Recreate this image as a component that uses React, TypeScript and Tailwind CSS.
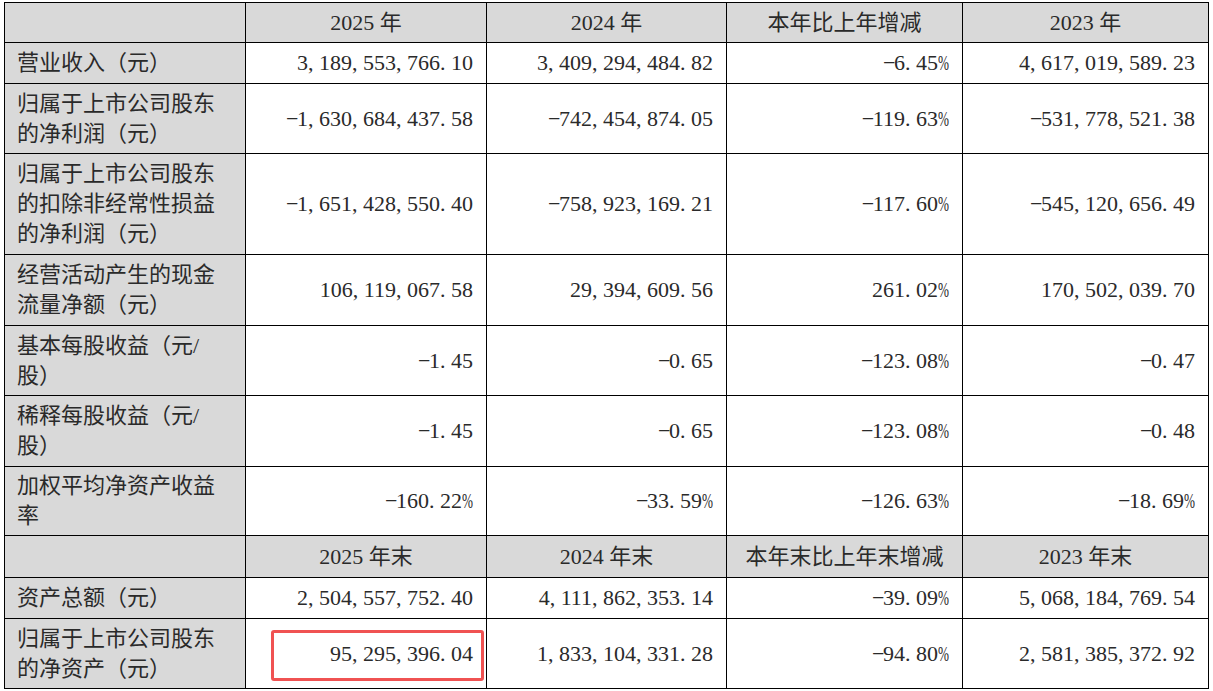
import React from 'react';

type Row = {
  label: string[];
  values: string[];
  h: string;
};

const topHead = ['2025 年', '2024 年', '本年比上年增减', '2023 年'];
const bottomHead = ['2025 年末', '2024 年末', '本年末比上年末增减', '2023 年末'];

const topRows: Row[] = [
  { label: ['营业收入（元）'], values: ['3,189,553,766.10', '3,409,294,484.82', '−6.45%', '4,617,019,589.23'], h: 'h-[41px]' },
  { label: ['归属于上市公司股东', '的净利润（元）'], values: ['−1,630,684,437.58', '−742,454,874.05', '−119.63%', '−531,778,521.38'], h: 'h-[70px]' },
  { label: ['归属于上市公司股东', '的扣除非经常性损益', '的净利润（元）'], values: ['−1,651,428,550.40', '−758,923,169.21', '−117.60%', '−545,120,656.49'], h: 'h-[101px]' },
  { label: ['经营活动产生的现金', '流量净额（元）'], values: ['106,119,067.58', '29,394,609.56', '261.02%', '170,502,039.70'], h: 'h-[71px]' },
  { label: ['基本每股收益（元/', '股）'], values: ['−1.45', '−0.65', '−123.08%', '−0.47'], h: 'h-[70px]' },
  { label: ['稀释每股收益（元/', '股）'], values: ['−1.45', '−0.65', '−123.08%', '−0.48'], h: 'h-[71px]' },
  { label: ['加权平均净资产收益', '率'], values: ['−160.22%', '−33.59%', '−126.63%', '−18.69%'], h: 'h-[69px]' },
];

const bottomRows: Row[] = [
  { label: ['资产总额（元）'], values: ['2,504,557,752.40', '4,111,862,353.14', '−39.09%', '5,068,184,769.54'], h: 'h-[41px]' },
  { label: ['归属于上市公司股东', '的净资产（元）'], values: ['95,295,396.04', '1,833,104,331.28', '−94.80%', '2,581,385,372.92'], h: 'h-[70px]' },
];

// punctuation gets a half-em box, like the document's original font
function Num({ v }: { v: string }) {
  return (
    <span>
      {[...v].map((c, i) => {
        if (c === ',' || c === '.' || c === '−')
          return (
            <span key={i} className="inline-block w-[11px] text-left">
              {c}
            </span>
          );
        if (c === '%')
          return (
            <span key={i} className="inline-block w-[11px] text-left">
              <span className="inline-block origin-left scale-x-[0.6]">%</span>
            </span>
          );
        return c;
      })}
    </span>
  );
}

function HeadRow({ cols, h }: { cols: string[]; h: string }) {
  return (
    <tr className={h}>
      <td className="border border-black bg-[#d9d9d9] p-0"></td>
      {cols.map((c) => (
        <td key={c} className="border border-black bg-[#d9d9d9] p-0 text-center">
          {c}
        </td>
      ))}
    </tr>
  );
}

function DataRow({ row, mark }: { row: Row; mark?: boolean }) {
  return (
    <tr className={row.h}>
      <td className="border border-black bg-[#d9d9d9] pl-[12px] pr-1 py-[3px] align-middle">
        {row.label.map((l, i) => (
          <div key={i}>{l}</div>
        ))}
      </td>
      {row.values.map((v, i) => (
        <td key={i} className="relative border border-black bg-white py-0 pr-[13px] text-right align-middle">
          {mark && i === 0 && (
            <div className="absolute left-[25px] right-[2px] top-[11px] bottom-[7px] rounded-[3px] border-[3px] border-[#f05252]"></div>
          )}
          <Num v={v} />
        </td>
      ))}
    </tr>
  );
}

export default function App() {
  return (
    <div className="w-[1213px] h-[691px] bg-white pl-[4px] pt-[2px]">
      <table
        className="table-fixed border-collapse w-[1204px] text-[22px] leading-[30px] text-[#2a2a2a]"
        style={{ fontFamily: '"Liberation Serif", "Noto Sans CJK SC", serif' }}
      >
        <colgroup>
          <col className="w-[241px]" />
          <col className="w-[241px]" />
          <col className="w-[240px]" />
          <col className="w-[236px]" />
          <col className="w-[246px]" />
        </colgroup>
        <tbody>
          <HeadRow cols={topHead} h="h-[40px]" />
          {topRows.map((r, i) => (
            <DataRow key={i} row={r} />
          ))}
          <HeadRow cols={bottomHead} h="h-[42px]" />
          {bottomRows.map((r, i) => (
            <DataRow key={i} row={r} mark={i === 1} />
          ))}
        </tbody>
      </table>
    </div>
  );
}
